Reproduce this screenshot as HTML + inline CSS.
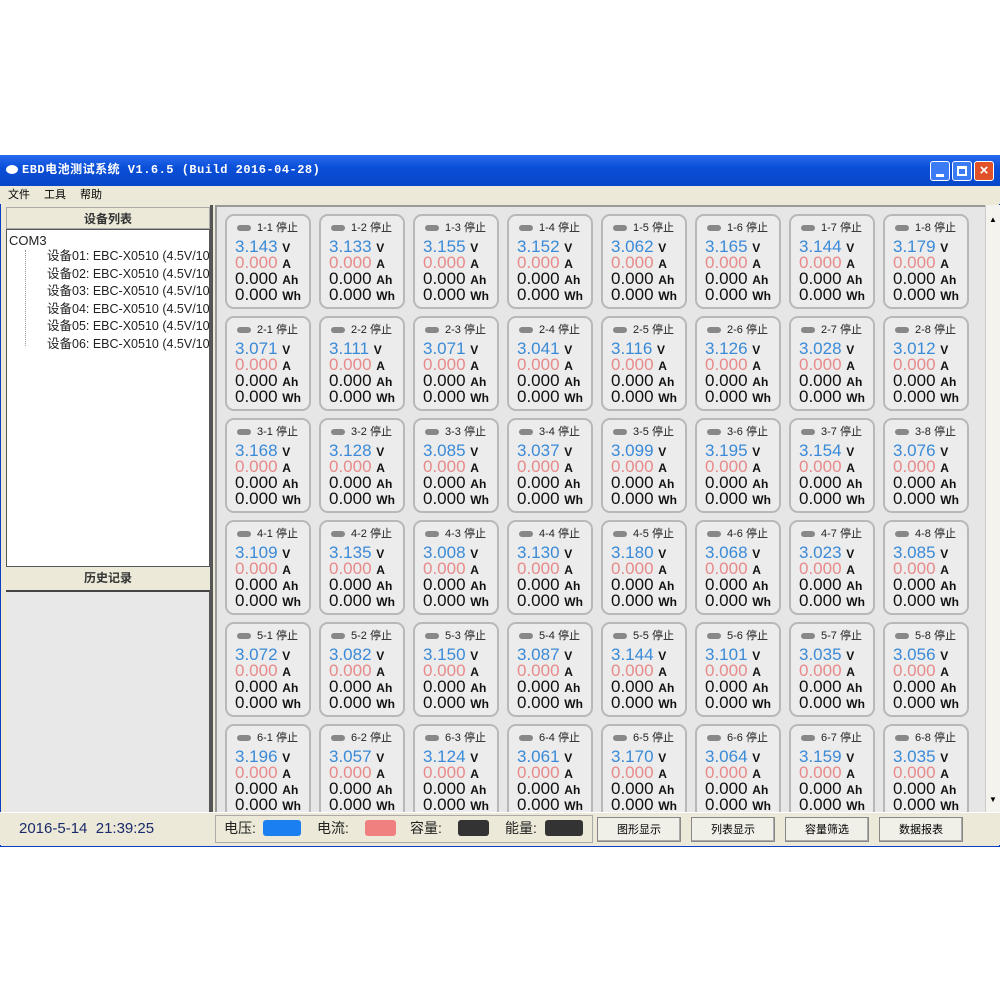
<!DOCTYPE html>
<html><head><meta charset="utf-8"><style>
*{margin:0;padding:0;box-sizing:border-box}
body{width:1000px;height:1000px;background:#fff;position:relative;overflow:hidden;font-family:"Liberation Sans","Noto Sans CJK SC",sans-serif}
.a{position:absolute}
#win{left:0;top:155px;width:1000px;height:692px;background:#ece9d8;border:1px solid #0a3fc4}
#title{left:0;top:155px;width:1000px;height:31px;background:linear-gradient(#2a6cf0,#0a4fd8 40%,#0846c8);color:#fff;font:bold 12px "Liberation Mono","Noto Sans CJK SC",monospace;line-height:31px;padding-left:22px;letter-spacing:.5px}
.tb{top:161px;width:20px;height:20px;border:1px solid #fff;border-radius:3px;background:#3b7cf4}
#menu{left:0;top:186px;width:1000px;height:18px;font-size:11px;line-height:18px;padding-left:8px;background:#ece9d8}
#menu span{margin-right:14px}
.ph{left:6px;width:204px;height:22px;background:#ece9d8;text-align:center;font-size:12px;line-height:22px;font-weight:bold;color:#333}
#tree{left:6px;top:229px;width:204px;height:338px;background:#fff;border:1px solid #555;font-size:13px;color:#222;overflow:hidden}
#hist{left:6px;top:590px;width:204px;height:222px;background:#e8e8e8;border-top:2px solid #444;border-right:1px solid #555}
#grid{left:215px;top:205px;width:770px;height:607px;background:#e6e6e6;border-left:2px solid #999;border-top:2px solid #999;overflow:hidden}
#sb{left:985px;top:205px;width:15px;height:607px;background:#f4f3ee;border-left:1px solid #ccc}
.c{position:absolute;width:86px;height:95px;border:2px solid #b8b8b8;border-radius:9px;background:#ececec;font-size:17px;line-height:16px;padding-left:8px}
.c .h{font-size:11px;height:23px;line-height:24px;padding-left:22px;position:relative;color:#222}
.c .h:before{content:"";position:absolute;left:2px;top:9px;width:14px;height:6px;border-radius:3px;background:#888}
.v{color:#3a8ad8}.i{color:#e88a8a}.k{color:#111}
.c b{font-size:12px;color:#111;line-height:0}
.c span{line-height:0}
#bot{left:0;top:812px;width:1000px;height:33px;background:#ece9d8;border-top:1px solid #fff}
.btn{top:817px;width:84px;height:25px;border:1px solid #888;background:#f0efe8;font-size:11px;text-align:center;line-height:25px;box-shadow:inset -1px -1px #aaa}
.sw{top:820px;height:16px;border-radius:3px}
.lg{top:817px;font-size:14px;line-height:22px;color:#222}
</style></head><body>
<div class="a" id="win"></div>
<div class="a" id="title">EBD电池测试系统 V1.6.5 (Build 2016-04-28)</div>
<div class="a" style="left:6px;top:165px;width:12px;height:9px;border-radius:50%;background:#fff"></div>
<div class="a tb" style="left:930px"><div class="a" style="left:5px;top:12px;width:8px;height:3px;background:#fff"></div></div>
<div class="a tb" style="left:952px"><div class="a" style="left:4px;top:4px;width:10px;height:10px;border:2px solid #fff;border-top-width:3px"></div></div>
<div class="a tb" style="left:974px;background:#e0512a;color:#fff;font-weight:bold;text-align:center;line-height:18px;font-size:15px">×</div>
<div class="a" id="menu"><span>文件</span><span>工具</span><span>帮助</span></div>
<div class="a ph" style="top:207px;border:1px solid #aaa">设备列表</div>
<div class="a" id="tree">
<div style="padding:3px 0 0 2px">COM3</div>
<div style="position:absolute;left:18px;top:20px;height:96px;border-left:1px dotted #999"></div>
<div style="padding-left:40px;line-height:17.5px;white-space:nowrap;font-size:12.5px">设备01: EBC-X0510 (4.5V/10A<br>设备02: EBC-X0510 (4.5V/10A<br>设备03: EBC-X0510 (4.5V/10A<br>设备04: EBC-X0510 (4.5V/10A<br>设备05: EBC-X0510 (4.5V/10A<br>设备06: EBC-X0510 (4.5V/10A</div>
</div>
<div class="a ph" style="top:567px">历史记录</div>
<div class="a" id="hist"></div>
<div class="a" style="left:210px;top:205px;width:3px;height:607px;background:#555"></div>
<div class="a" id="grid">
<div class="c" style="left:8px;top:7px"><div class="h">1-1 停止</div><span class="v">3.143</span> <b>V</b><br><span class="i">0.000</span> <b>A</b><br><span class="k">0.000</span> <b>Ah</b><br><span class="k">0.000</span> <b>Wh</b></div>
<div class="c" style="left:102px;top:7px"><div class="h">1-2 停止</div><span class="v">3.133</span> <b>V</b><br><span class="i">0.000</span> <b>A</b><br><span class="k">0.000</span> <b>Ah</b><br><span class="k">0.000</span> <b>Wh</b></div>
<div class="c" style="left:196px;top:7px"><div class="h">1-3 停止</div><span class="v">3.155</span> <b>V</b><br><span class="i">0.000</span> <b>A</b><br><span class="k">0.000</span> <b>Ah</b><br><span class="k">0.000</span> <b>Wh</b></div>
<div class="c" style="left:290px;top:7px"><div class="h">1-4 停止</div><span class="v">3.152</span> <b>V</b><br><span class="i">0.000</span> <b>A</b><br><span class="k">0.000</span> <b>Ah</b><br><span class="k">0.000</span> <b>Wh</b></div>
<div class="c" style="left:384px;top:7px"><div class="h">1-5 停止</div><span class="v">3.062</span> <b>V</b><br><span class="i">0.000</span> <b>A</b><br><span class="k">0.000</span> <b>Ah</b><br><span class="k">0.000</span> <b>Wh</b></div>
<div class="c" style="left:478px;top:7px"><div class="h">1-6 停止</div><span class="v">3.165</span> <b>V</b><br><span class="i">0.000</span> <b>A</b><br><span class="k">0.000</span> <b>Ah</b><br><span class="k">0.000</span> <b>Wh</b></div>
<div class="c" style="left:572px;top:7px"><div class="h">1-7 停止</div><span class="v">3.144</span> <b>V</b><br><span class="i">0.000</span> <b>A</b><br><span class="k">0.000</span> <b>Ah</b><br><span class="k">0.000</span> <b>Wh</b></div>
<div class="c" style="left:666px;top:7px"><div class="h">1-8 停止</div><span class="v">3.179</span> <b>V</b><br><span class="i">0.000</span> <b>A</b><br><span class="k">0.000</span> <b>Ah</b><br><span class="k">0.000</span> <b>Wh</b></div>

<div class="c" style="left:8px;top:109px"><div class="h">2-1 停止</div><span class="v">3.071</span> <b>V</b><br><span class="i">0.000</span> <b>A</b><br><span class="k">0.000</span> <b>Ah</b><br><span class="k">0.000</span> <b>Wh</b></div>
<div class="c" style="left:102px;top:109px"><div class="h">2-2 停止</div><span class="v">3.111</span> <b>V</b><br><span class="i">0.000</span> <b>A</b><br><span class="k">0.000</span> <b>Ah</b><br><span class="k">0.000</span> <b>Wh</b></div>
<div class="c" style="left:196px;top:109px"><div class="h">2-3 停止</div><span class="v">3.071</span> <b>V</b><br><span class="i">0.000</span> <b>A</b><br><span class="k">0.000</span> <b>Ah</b><br><span class="k">0.000</span> <b>Wh</b></div>
<div class="c" style="left:290px;top:109px"><div class="h">2-4 停止</div><span class="v">3.041</span> <b>V</b><br><span class="i">0.000</span> <b>A</b><br><span class="k">0.000</span> <b>Ah</b><br><span class="k">0.000</span> <b>Wh</b></div>
<div class="c" style="left:384px;top:109px"><div class="h">2-5 停止</div><span class="v">3.116</span> <b>V</b><br><span class="i">0.000</span> <b>A</b><br><span class="k">0.000</span> <b>Ah</b><br><span class="k">0.000</span> <b>Wh</b></div>
<div class="c" style="left:478px;top:109px"><div class="h">2-6 停止</div><span class="v">3.126</span> <b>V</b><br><span class="i">0.000</span> <b>A</b><br><span class="k">0.000</span> <b>Ah</b><br><span class="k">0.000</span> <b>Wh</b></div>
<div class="c" style="left:572px;top:109px"><div class="h">2-7 停止</div><span class="v">3.028</span> <b>V</b><br><span class="i">0.000</span> <b>A</b><br><span class="k">0.000</span> <b>Ah</b><br><span class="k">0.000</span> <b>Wh</b></div>
<div class="c" style="left:666px;top:109px"><div class="h">2-8 停止</div><span class="v">3.012</span> <b>V</b><br><span class="i">0.000</span> <b>A</b><br><span class="k">0.000</span> <b>Ah</b><br><span class="k">0.000</span> <b>Wh</b></div>

<div class="c" style="left:8px;top:211px"><div class="h">3-1 停止</div><span class="v">3.168</span> <b>V</b><br><span class="i">0.000</span> <b>A</b><br><span class="k">0.000</span> <b>Ah</b><br><span class="k">0.000</span> <b>Wh</b></div>
<div class="c" style="left:102px;top:211px"><div class="h">3-2 停止</div><span class="v">3.128</span> <b>V</b><br><span class="i">0.000</span> <b>A</b><br><span class="k">0.000</span> <b>Ah</b><br><span class="k">0.000</span> <b>Wh</b></div>
<div class="c" style="left:196px;top:211px"><div class="h">3-3 停止</div><span class="v">3.085</span> <b>V</b><br><span class="i">0.000</span> <b>A</b><br><span class="k">0.000</span> <b>Ah</b><br><span class="k">0.000</span> <b>Wh</b></div>
<div class="c" style="left:290px;top:211px"><div class="h">3-4 停止</div><span class="v">3.037</span> <b>V</b><br><span class="i">0.000</span> <b>A</b><br><span class="k">0.000</span> <b>Ah</b><br><span class="k">0.000</span> <b>Wh</b></div>
<div class="c" style="left:384px;top:211px"><div class="h">3-5 停止</div><span class="v">3.099</span> <b>V</b><br><span class="i">0.000</span> <b>A</b><br><span class="k">0.000</span> <b>Ah</b><br><span class="k">0.000</span> <b>Wh</b></div>
<div class="c" style="left:478px;top:211px"><div class="h">3-6 停止</div><span class="v">3.195</span> <b>V</b><br><span class="i">0.000</span> <b>A</b><br><span class="k">0.000</span> <b>Ah</b><br><span class="k">0.000</span> <b>Wh</b></div>
<div class="c" style="left:572px;top:211px"><div class="h">3-7 停止</div><span class="v">3.154</span> <b>V</b><br><span class="i">0.000</span> <b>A</b><br><span class="k">0.000</span> <b>Ah</b><br><span class="k">0.000</span> <b>Wh</b></div>
<div class="c" style="left:666px;top:211px"><div class="h">3-8 停止</div><span class="v">3.076</span> <b>V</b><br><span class="i">0.000</span> <b>A</b><br><span class="k">0.000</span> <b>Ah</b><br><span class="k">0.000</span> <b>Wh</b></div>

<div class="c" style="left:8px;top:313px"><div class="h">4-1 停止</div><span class="v">3.109</span> <b>V</b><br><span class="i">0.000</span> <b>A</b><br><span class="k">0.000</span> <b>Ah</b><br><span class="k">0.000</span> <b>Wh</b></div>
<div class="c" style="left:102px;top:313px"><div class="h">4-2 停止</div><span class="v">3.135</span> <b>V</b><br><span class="i">0.000</span> <b>A</b><br><span class="k">0.000</span> <b>Ah</b><br><span class="k">0.000</span> <b>Wh</b></div>
<div class="c" style="left:196px;top:313px"><div class="h">4-3 停止</div><span class="v">3.008</span> <b>V</b><br><span class="i">0.000</span> <b>A</b><br><span class="k">0.000</span> <b>Ah</b><br><span class="k">0.000</span> <b>Wh</b></div>
<div class="c" style="left:290px;top:313px"><div class="h">4-4 停止</div><span class="v">3.130</span> <b>V</b><br><span class="i">0.000</span> <b>A</b><br><span class="k">0.000</span> <b>Ah</b><br><span class="k">0.000</span> <b>Wh</b></div>
<div class="c" style="left:384px;top:313px"><div class="h">4-5 停止</div><span class="v">3.180</span> <b>V</b><br><span class="i">0.000</span> <b>A</b><br><span class="k">0.000</span> <b>Ah</b><br><span class="k">0.000</span> <b>Wh</b></div>
<div class="c" style="left:478px;top:313px"><div class="h">4-6 停止</div><span class="v">3.068</span> <b>V</b><br><span class="i">0.000</span> <b>A</b><br><span class="k">0.000</span> <b>Ah</b><br><span class="k">0.000</span> <b>Wh</b></div>
<div class="c" style="left:572px;top:313px"><div class="h">4-7 停止</div><span class="v">3.023</span> <b>V</b><br><span class="i">0.000</span> <b>A</b><br><span class="k">0.000</span> <b>Ah</b><br><span class="k">0.000</span> <b>Wh</b></div>
<div class="c" style="left:666px;top:313px"><div class="h">4-8 停止</div><span class="v">3.085</span> <b>V</b><br><span class="i">0.000</span> <b>A</b><br><span class="k">0.000</span> <b>Ah</b><br><span class="k">0.000</span> <b>Wh</b></div>

<div class="c" style="left:8px;top:415px"><div class="h">5-1 停止</div><span class="v">3.072</span> <b>V</b><br><span class="i">0.000</span> <b>A</b><br><span class="k">0.000</span> <b>Ah</b><br><span class="k">0.000</span> <b>Wh</b></div>
<div class="c" style="left:102px;top:415px"><div class="h">5-2 停止</div><span class="v">3.082</span> <b>V</b><br><span class="i">0.000</span> <b>A</b><br><span class="k">0.000</span> <b>Ah</b><br><span class="k">0.000</span> <b>Wh</b></div>
<div class="c" style="left:196px;top:415px"><div class="h">5-3 停止</div><span class="v">3.150</span> <b>V</b><br><span class="i">0.000</span> <b>A</b><br><span class="k">0.000</span> <b>Ah</b><br><span class="k">0.000</span> <b>Wh</b></div>
<div class="c" style="left:290px;top:415px"><div class="h">5-4 停止</div><span class="v">3.087</span> <b>V</b><br><span class="i">0.000</span> <b>A</b><br><span class="k">0.000</span> <b>Ah</b><br><span class="k">0.000</span> <b>Wh</b></div>
<div class="c" style="left:384px;top:415px"><div class="h">5-5 停止</div><span class="v">3.144</span> <b>V</b><br><span class="i">0.000</span> <b>A</b><br><span class="k">0.000</span> <b>Ah</b><br><span class="k">0.000</span> <b>Wh</b></div>
<div class="c" style="left:478px;top:415px"><div class="h">5-6 停止</div><span class="v">3.101</span> <b>V</b><br><span class="i">0.000</span> <b>A</b><br><span class="k">0.000</span> <b>Ah</b><br><span class="k">0.000</span> <b>Wh</b></div>
<div class="c" style="left:572px;top:415px"><div class="h">5-7 停止</div><span class="v">3.035</span> <b>V</b><br><span class="i">0.000</span> <b>A</b><br><span class="k">0.000</span> <b>Ah</b><br><span class="k">0.000</span> <b>Wh</b></div>
<div class="c" style="left:666px;top:415px"><div class="h">5-8 停止</div><span class="v">3.056</span> <b>V</b><br><span class="i">0.000</span> <b>A</b><br><span class="k">0.000</span> <b>Ah</b><br><span class="k">0.000</span> <b>Wh</b></div>

<div class="c" style="left:8px;top:517px"><div class="h">6-1 停止</div><span class="v">3.196</span> <b>V</b><br><span class="i">0.000</span> <b>A</b><br><span class="k">0.000</span> <b>Ah</b><br><span class="k">0.000</span> <b>Wh</b></div>
<div class="c" style="left:102px;top:517px"><div class="h">6-2 停止</div><span class="v">3.057</span> <b>V</b><br><span class="i">0.000</span> <b>A</b><br><span class="k">0.000</span> <b>Ah</b><br><span class="k">0.000</span> <b>Wh</b></div>
<div class="c" style="left:196px;top:517px"><div class="h">6-3 停止</div><span class="v">3.124</span> <b>V</b><br><span class="i">0.000</span> <b>A</b><br><span class="k">0.000</span> <b>Ah</b><br><span class="k">0.000</span> <b>Wh</b></div>
<div class="c" style="left:290px;top:517px"><div class="h">6-4 停止</div><span class="v">3.061</span> <b>V</b><br><span class="i">0.000</span> <b>A</b><br><span class="k">0.000</span> <b>Ah</b><br><span class="k">0.000</span> <b>Wh</b></div>
<div class="c" style="left:384px;top:517px"><div class="h">6-5 停止</div><span class="v">3.170</span> <b>V</b><br><span class="i">0.000</span> <b>A</b><br><span class="k">0.000</span> <b>Ah</b><br><span class="k">0.000</span> <b>Wh</b></div>
<div class="c" style="left:478px;top:517px"><div class="h">6-6 停止</div><span class="v">3.064</span> <b>V</b><br><span class="i">0.000</span> <b>A</b><br><span class="k">0.000</span> <b>Ah</b><br><span class="k">0.000</span> <b>Wh</b></div>
<div class="c" style="left:572px;top:517px"><div class="h">6-7 停止</div><span class="v">3.159</span> <b>V</b><br><span class="i">0.000</span> <b>A</b><br><span class="k">0.000</span> <b>Ah</b><br><span class="k">0.000</span> <b>Wh</b></div>
<div class="c" style="left:666px;top:517px"><div class="h">6-8 停止</div><span class="v">3.035</span> <b>V</b><br><span class="i">0.000</span> <b>A</b><br><span class="k">0.000</span> <b>Ah</b><br><span class="k">0.000</span> <b>Wh</b></div>
</div>
<div class="a" id="sb"><div class="a" style="left:0;top:0;width:14px;height:30px;font-size:8px;text-align:center;line-height:30px">▲</div><div class="a" style="left:0;top:590px;width:14px;height:16px;font-size:8px;text-align:center">▼</div></div>
<div class="a" id="bot"></div>
<div class="a" style="left:19px;top:820px;font-size:15px;color:#1a2a6a">2016-5-14&nbsp; 21:39:25</div>
<div class="a" style="left:215px;top:815px;width:378px;height:28px;border:1px solid #aaa"></div>
<div class="a lg" style="left:224px">电压:</div><div class="a sw" style="left:263px;width:38px;background:#1a7ff0"></div>
<div class="a lg" style="left:317px">电流:</div><div class="a sw" style="left:365px;width:31px;background:#f08080"></div>
<div class="a lg" style="left:410px">容量:</div><div class="a sw" style="left:458px;width:31px;background:#333"></div>
<div class="a lg" style="left:505px">能量:</div><div class="a sw" style="left:545px;width:38px;background:#333"></div>
<div class="a btn" style="left:597px">图形显示</div>
<div class="a btn" style="left:691px">列表显示</div>
<div class="a btn" style="left:785px">容量筛选</div>
<div class="a btn" style="left:879px">数据报表</div>
</body></html>
